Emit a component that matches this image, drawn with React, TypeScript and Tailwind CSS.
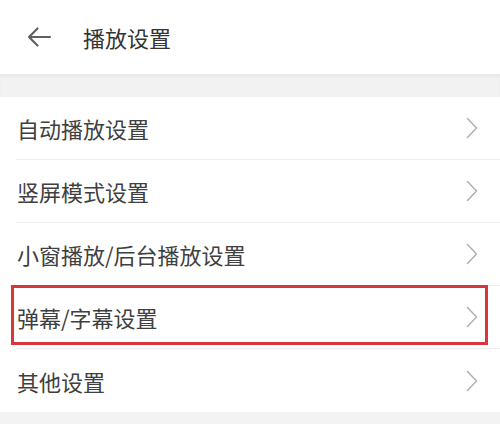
import React from "react";

const items = ["自动播放设置", "竖屏模式设置", "小窗播放/后台播放设置", "弹幕/字幕设置", "其他设置"];

function Chevron() {
  return (
    <svg width="12" height="22" viewBox="0 0 12 22" fill="none">
      <path d="M1.5 1.5 L10.5 11 L1.5 20.5" stroke="#b0b0b0" strokeWidth="1.5" strokeLinecap="round" strokeLinejoin="round" />
    </svg>
  );
}

export default function App() {
  return (
    <div
      className="relative w-[500px] h-[424px] bg-[#f3f3f4] overflow-hidden"
      style={{ fontFamily: '"Noto Sans CJK SC", "Noto Sans", sans-serif' }}
    >
      <div className="h-[74px] bg-white flex items-center">
        <div className="ml-[26px] w-[26px] flex items-center">
          <svg width="26" height="22" viewBox="0 0 26 22" fill="none">
            <path d="M24 11 H3 M11.5 2.5 L3 11 L11.5 19.5" stroke="#616161" strokeWidth="2.2" strokeLinecap="round" strokeLinejoin="round" />
          </svg>
        </div>
        <div className="ml-[31px] text-[22px] text-[#333] leading-none">播放设置</div>
      </div>
      <div className="h-[23px] bg-[#f2f2f3] shadow-[inset_0_3px_3px_rgba(0,0,0,0.04)]" />
      <div className="bg-white">
        {items.map((t, i) => (
          <div key={t} className="h-[63px] flex flex-col">
            <div className="flex-1 flex items-center justify-between pl-[17px] pr-[22px]">
              <span className="text-[22px] text-[#404040] leading-none">{t}</span>
              <Chevron />
            </div>
            {i < items.length - 1 && <div className="ml-[16px] h-px bg-[#eeeeee]" />}
          </div>
        ))}
      </div>
      <div className="absolute left-[11px] top-[285px] w-[477px] h-[60px] border-[3px] border-[#d8353c]" />
    </div>
  );
}
